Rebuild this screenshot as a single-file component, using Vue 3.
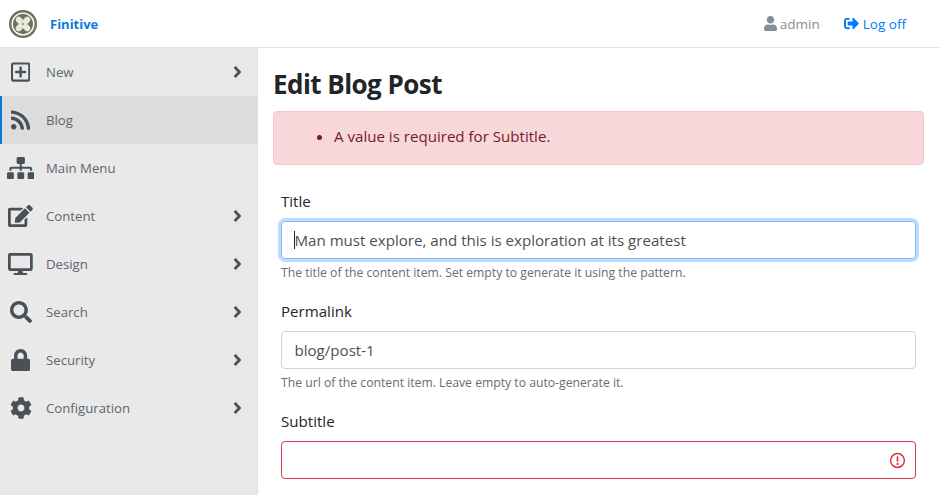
<template>
  <div class="page">
    <header class="navbar">
      <a class="brand">
        <svg class="logo" viewBox="0 0 32 32">
          <circle cx="16" cy="16" r="14.6" fill="none" stroke="#6f7358" stroke-width="2.8" />
          <circle cx="16" cy="16" r="11.6" fill="#6f7358" />
          <g fill="#e6e7df">
            <ellipse cx="12" cy="12" rx="4.8" ry="3.5" transform="rotate(45 12 12)" />
            <ellipse cx="20" cy="12" rx="4.8" ry="3.5" transform="rotate(-45 20 12)" />
            <ellipse cx="12" cy="20" rx="4.8" ry="3.5" transform="rotate(-45 12 20)" />
            <ellipse cx="20" cy="20" rx="4.8" ry="3.5" transform="rotate(45 20 20)" />
          </g>
        </svg>
        <span class="brand-name">Finitive</span>
      </a>
      <div class="nav-right">
        <span class="nav-user">
          <svg class="nav-icon" viewBox="0 0 448 512"><path :d="userIcon" /></svg>
          admin
        </span>
        <a class="nav-logoff">
          <svg class="nav-icon logoff-icon" viewBox="0 0 512 512"><path :d="logoffIcon" /></svg>
          Log off
        </a>
      </div>
    </header>

    <div class="body">
      <nav class="sidebar">
        <a
          v-for="item in menu"
          :key="item.label"
          class="menu-item"
          :class="{ active: item.active }"
        >
          <span class="menu-icon">
            <svg :viewBox="item.box" :width="item.width" height="22"><path :d="item.path" /></svg>
          </span>
          <span class="menu-label">{{ item.label }}</span>
          <svg v-if="item.more" class="chevron" viewBox="0 0 256 512"><path :d="chevron" /></svg>
        </a>
      </nav>

      <main class="content">
        <h1>Edit Blog Post</h1>

        <div class="alert">
          <ul>
            <li>A value is required for Subtitle.</li>
          </ul>
        </div>

        <div class="field">
          <label>Title</label>
          <div class="input-wrap">
            <input
              ref="titleInput"
              class="input focused"
              type="text"
              value="Man must explore, and this is exploration at its greatest"
            />
            <span class="caret"></span>
          </div>
          <small>The title of the content item. Set empty to generate it using the pattern.</small>
        </div>

        <div class="field">
          <label>Permalink</label>
          <input class="input" type="text" value="blog/post-1" />
          <small>The url of the content item. Leave empty to auto-generate it.</small>
        </div>

        <div class="field">
          <label>Subtitle</label>
          <div class="input-wrap">
            <input class="input invalid" type="text" value="" />
            <svg class="invalid-icon" viewBox="0 0 16 16">
              <circle cx="8" cy="8" r="6.5" fill="none" stroke="#dc3545" stroke-width="1.4" />
              <rect x="7.2" y="4" width="1.6" height="5.2" rx="0.6" fill="#dc3545" />
              <circle cx="8" cy="11.2" r="1" fill="#dc3545" />
            </svg>
          </div>
        </div>
      </main>
    </div>
  </div>
</template>

<script setup>
import { ref, onMounted } from 'vue'

const titleInput = ref(null)

const chevron =
  'M224.3 273l-136 136c-9.4 9.4-24.6 9.4-33.9 0l-22.6-22.6c-9.4-9.4-9.4-24.6 0-33.9l96.4-96.4-96.4-96.4c-9.4-9.4-9.4-24.6 0-33.9L54.3 103c9.4-9.4 24.6-9.4 33.9 0l136 136c9.5 9.4 9.5 24.6.1 34z'
const userIcon =
  'M224 256c70.7 0 128-57.3 128-128S294.7 0 224 0 96 57.3 96 128s57.3 128 128 128zm89.6 32h-16.7c-22.2 10.2-46.9 16-72.9 16s-50.6-5.8-72.9-16h-16.7C60.2 288 0 348.2 0 422.4V464c0 26.5 21.5 48 48 48h352c26.5 0 48-21.5 48-48v-41.6c0-74.2-60.2-134.4-134.4-134.4z'
const logoffIcon =
  'M497 273L329 441c-15 15-41 4.5-41-17v-96H152c-13.3 0-24-10.7-24-24v-96c0-13.3 10.7-24 24-24h136V88c0-21.4 25.9-32 41-17l168 168c9.3 9.4 9.3 24.6 0 34zM192 436v-40c0-6.6-5.4-12-12-12H96c-17.7 0-32-14.3-32-32V160c0-17.7 14.3-32 32-32h84c6.6 0 12-5.4 12-12V76c0-6.6-5.4-12-12-12H96c-53 0-96 43-96 96v192c0 53 43 96 96 96h84c6.6 0 12-5.4 12-12z'

const menu = [
  {
    label: 'New',
    more: true,
    box: '0 0 448 512',
    width: 19.25,
    path: 'M352 240v32c0 6.6-5.4 12-12 12h-88v88c0 6.6-5.4 12-12 12h-32c-6.6 0-12-5.4-12-12v-88h-88c-6.6 0-12-5.4-12-12v-32c0-6.6 5.4-12 12-12h88v-88c0-6.6 5.4-12 12-12h32c6.6 0 12 5.4 12 12v88h88c6.6 0 12 5.4 12 12zm96-160v352c0 26.5-21.5 48-48 48H48c-26.5 0-48-21.5-48-48V80c0-26.5 21.5-48 48-48h352c26.5 0 48 21.5 48 48zm-48 346V86c0-3.3-2.7-6-6-6H54c-3.3 0-6 2.7-6 6v340c0 3.3 2.7 6 6 6h340c3.3 0 6-2.7 6-6z',
  },
  {
    label: 'Blog',
    active: true,
    box: '0 0 448 512',
    width: 19.25,
    path: 'M128.081 415.959c0 35.369-28.672 64.041-64.041 64.041S0 451.328 0 415.959s28.672-64.041 64.041-64.041 64.04 28.673 64.04 64.041zm175.66 47.25c-8.354-154.6-132.185-278.587-286.95-286.95C7.656 175.765 0 183.105 0 192.253v48.069c0 8.415 6.49 15.472 14.887 16.018 111.832 7.284 201.473 96.702 208.772 208.772.547 8.397 7.604 14.887 16.018 14.887h48.069c9.149.001 16.489-7.655 15.995-16.79zm144.249.288C439.596 229.677 251.465 40.445 16.503 32.01 7.473 31.686 0 38.981 0 48.016v48.068c0 8.625 6.835 15.645 15.453 15.999 191.179 7.839 344.627 161.316 352.465 352.465.353 8.618 7.373 15.453 15.999 15.453h48.068c9.034-.001 16.329-7.474 16.005-16.504z',
  },
  {
    label: 'Main Menu',
    box: '0 0 640 512',
    width: 27.5,
    path: 'M128 352H32c-17.67 0-32 14.33-32 32v96c0 17.67 14.33 32 32 32h96c17.67 0 32-14.33 32-32v-96c0-17.67-14.33-32-32-32zm-24-80h192v48h48v-48h192v48h48v-57.59c0-21.17-17.23-38.41-38.41-38.41H344v-64h40c17.67 0 32-14.33 32-32V32c0-17.67-14.33-32-32-32H256c-17.67 0-32 14.33-32 32v96c0 17.67 14.33 32 32 32h40v64H94.41C73.23 224 56 241.23 56 262.41V320h48v-48zm264 80h-96c-17.67 0-32 14.33-32 32v96c0 17.67 14.33 32 32 32h96c17.67 0 32-14.33 32-32v-96c0-17.67-14.33-32-32-32zm240 0h-96c-17.67 0-32 14.33-32 32v96c0 17.67 14.33 32 32 32h96c17.67 0 32-14.33 32-32v-96c0-17.67-14.33-32-32-32z',
  },
  {
    label: 'Content',
    more: true,
    box: '0 0 576 512',
    width: 24.75,
    path: 'M402.6 83.2l90.2 90.2c3.8 3.8 3.8 10 0 13.8L274.4 405.6l-92.8 10.3c-12.4 1.4-22.9-9.1-21.5-21.5l10.3-92.8L388.8 83.2c3.8-3.8 10-3.8 13.8 0zm162-22.9l-48.8-48.8c-15.2-15.2-39.9-15.2-55.2 0l-35.4 35.4c-3.8 3.8-3.8 10 0 13.8l90.2 90.2c3.8 3.8 10 3.8 13.8 0l35.4-35.4c15.2-15.3 15.2-40 0-55.2zM384 346.2V448H64V128h229.8c3.2 0 6.2-1.3 8.5-3.5l40-40c7.6-7.6 2.2-20.5-8.5-20.5H48C21.5 64 0 85.5 0 112v352c0 26.5 21.5 48 48 48h352c26.5 0 48-21.5 48-48V306.2c0-10.7-12.9-16-20.5-8.5l-40 40c-2.2 2.3-3.5 5.3-3.5 8.5z',
  },
  {
    label: 'Design',
    more: true,
    box: '0 0 576 512',
    width: 24.75,
    path: 'M528 0H48C21.5 0 0 21.5 0 48v320c0 26.5 21.5 48 48 48h192l-16 48h-72c-13.3 0-24 10.7-24 24s10.7 24 24 24h272c13.3 0 24-10.7 24-24s-10.7-24-24-24h-72l-16-48h192c26.5 0 48-21.5 48-48V48c0-26.5-21.5-48-48-48zm-16 352H64V64h448v288z',
  },
  {
    label: 'Search',
    more: true,
    box: '0 0 512 512',
    width: 22,
    path: 'M505 442.7L405.3 343c-4.5-4.5-10.6-7-17-7H372c27.6-35.3 44-79.7 44-128C416 93.1 322.9 0 208 0S0 93.1 0 208s93.1 208 208 208c48.3 0 92.7-16.4 128-44v16.3c0 6.4 2.5 12.5 7 17l99.7 99.7c9.4 9.4 24.6 9.4 33.9 0l28.3-28.3c9.4-9.4 9.4-24.6.1-34zM208 336c-70.7 0-128-57.2-128-128 0-70.7 57.2-128 128-128 70.7 0 128 57.2 128 128 0 70.7-57.2 128-128 128z',
  },
  {
    label: 'Security',
    more: true,
    box: '0 0 448 512',
    width: 19.25,
    path: 'M400 224h-24v-72C376 68.2 307.8 0 224 0S72 68.2 72 152v72H48c-26.5 0-48 21.5-48 48v192c0 26.5 21.5 48 48 48h352c26.5 0 48-21.5 48-48V272c0-26.5-21.5-48-48-48zm-104 0H152v-72c0-39.7 32.3-72 72-72s72 32.3 72 72v72z',
  },
  {
    label: 'Configuration',
    more: true,
    box: '0 0 512 512',
    width: 22,
    path: 'M487.4 315.7l-42.6-24.6c4.3-23.2 4.3-47 0-70.2l42.6-24.6c4.9-2.8 7.1-8.6 5.5-14-11.1-35.6-30-67.8-54.7-94.6-3.8-4.1-10-5.1-14.8-2.3L380.8 110c-17.9-15.4-38.5-27.3-60.8-35.1V25.8c0-5.6-3.9-10.5-9.4-11.7-36.7-8.2-74.3-7.8-109.2 0-5.5 1.2-9.4 6.1-9.4 11.7V75c-22.2 7.9-42.8 19.8-60.8 35.1L88.7 85.5c-4.9-2.8-11-1.9-14.8 2.3-24.7 26.7-43.6 58.9-54.7 94.6-1.7 5.4.6 11.2 5.5 14L67.3 221c-4.3 23.2-4.3 47 0 70.2l-42.6 24.6c-4.9 2.8-7.1 8.6-5.5 14 11.1 35.6 30 67.8 54.7 94.6 3.8 4.1 10 5.1 14.8 2.3l42.6-24.6c17.9 15.4 38.5 27.3 60.8 35.1v49.2c0 5.6 3.9 10.5 9.4 11.7 36.7 8.2 74.3 7.8 109.2 0 5.5-1.2 9.4-6.1 9.4-11.7v-49.2c22.2-7.9 42.8-19.8 60.8-35.1l42.6 24.6c4.9 2.8 11 1.9 14.8-2.3 24.7-26.7 43.6-58.9 54.7-94.6 1.5-5.5-.7-11.3-5.6-14.1zM256 336c-44.1 0-80-35.9-80-80s35.9-80 80-80 80 35.9 80 80-35.9 80-80 80z',
  },
]

onMounted(() => {
  titleInput.value.focus()
  titleInput.value.setSelectionRange(0, 0)
})
</script>

<style>
html,
body {
  margin: 0;
  height: 100%;
  overflow: hidden;
  background: #fff;
}
</style>

<style scoped>
.page {
  height: 495px;
  display: flex;
  flex-direction: column;
  overflow: hidden;
  font-family: 'Open Sans', 'Noto Sans', sans-serif;
  font-size: 15.1px;
  color: #212529;
}

.navbar {
  height: 47px;
  flex: none;
  display: flex;
  align-items: center;
  justify-content: space-between;
  padding: 0 33px 0 9px;
  border-bottom: 1px solid #dfdfdf;
}

.brand {
  display: flex;
  align-items: center;
  gap: 13px;
}

.logo {
  width: 28px;
  height: 28px;
}

.brand-name {
  color: #0b78dc;
  font-size: 13px;
  font-weight: 700;
}

.nav-right {
  display: flex;
  align-items: center;
  gap: 24px;
  font-size: 13.5px;
}

.nav-user {
  color: #868e96;
  display: flex;
  align-items: center;
  gap: 3px;
}

.nav-logoff {
  color: #007bff;
  display: flex;
  align-items: center;
  gap: 4px;
}

.nav-icon {
  width: 13px;
  height: 15px;
  fill: currentColor;
}

.logoff-icon {
  width: 15px;
}

.body {
  flex: 1;
  display: flex;
  min-height: 0;
}

.sidebar {
  width: 257px;
  flex: none;
  background: #e9e9e9;
  border-right: 1px solid #dfdfdf;
}

.menu-item {
  height: 48px;
  display: flex;
  align-items: center;
  padding-right: 15px;
  color: #5f666d;
  font-size: 13.2px;
}

.menu-item.active {
  background: #dcdcdc;
  box-shadow: inset 2px 0 0 #0b78dc;
}

.menu-icon {
  width: 41px;
  margin-right: 5px;
  display: flex;
  justify-content: center;
}

.menu-icon svg {
  fill: #495057;
}

.menu-label {
  flex: 1;
}

.chevron {
  width: 9px;
  height: 18px;
  fill: #495057;
}

.content {
  flex: 1;
  min-width: 0;
  padding: 0 15px;
}

h1 {
  margin: 18px 0 8px;
  font-size: 26px;
  letter-spacing: -0.55px;
  line-height: 37px;
  font-weight: 700;
}

.alert {
  padding: 12px 20px 0;
  margin-bottom: 24px;
  background: #f8d7da;
  border: 1px solid #f5c6cb;
  border-radius: 4px;
  color: #721c24;
}

.alert ul {
  margin: 0 0 16px;
  padding-left: 40px;
  line-height: 24px;
}

.field {
  padding: 0 8px;
  margin-bottom: 17px;
}

label {
  display: block;
  line-height: 24px;
  margin-bottom: 8px;
}

.input {
  display: block;
  box-sizing: border-box;
  width: 100%;
  height: 38px;
  padding: 6px 12px 6px 12.5px;
  font: inherit;
  color: #495057;
  background: #fff;
  border: 1px solid #ced4da;
  border-radius: 4px;
  outline: none;
}

.input.focused {
  border-color: #80bdff;
  box-shadow: 0 0 0 3px rgba(0, 123, 255, 0.25);
  caret-color: transparent;
}

.input.invalid {
  border-color: #dc3545;
  padding-right: 36px;
}

small {
  display: block;
  margin-top: 4px;
  line-height: 19px;
  font-size: 12.2px;
  color: #666d75;
}

.input-wrap {
  position: relative;
}

.caret {
  position: absolute;
  left: 13px;
  top: 10px;
  width: 1px;
  height: 18px;
  background: #212529;
}

.invalid-icon {
  position: absolute;
  right: 10px;
  top: 11px;
  width: 17px;
  height: 17px;
}
</style>
